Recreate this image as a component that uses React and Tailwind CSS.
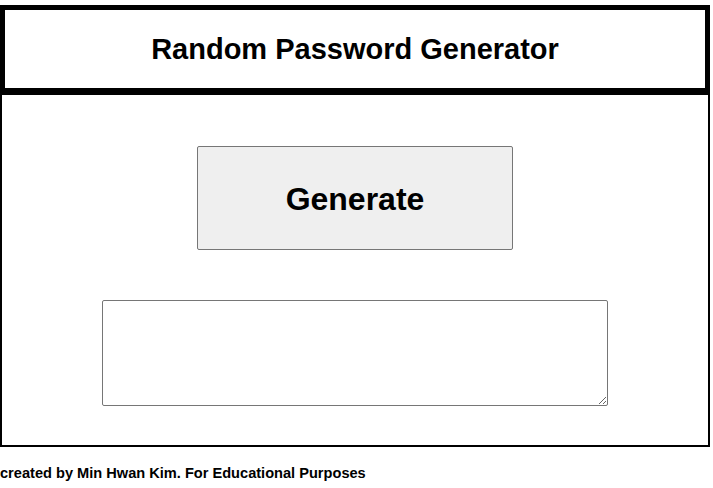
import React from "react";

const sans = { fontFamily: '"Liberation Sans", Arial, sans-serif' };

export default function App() {
  return (
    <div className="w-[713px] h-[488px] bg-white text-black" style={sans}>
      {/* Header */}
      <div className="mt-[5px] w-[710px] h-[88px] border-[5px] border-black flex items-center justify-center">
        <h1 className="text-[29px] font-bold pt-[2px]">Random Password Generator</h1>
      </div>

      {/* Main box */}
      <div className="w-[710px] h-[354px] border-2 border-black flex flex-col items-center">
        <button className="mt-[51px] w-[316px] h-[104px] bg-[#efefef] border border-[#767676] rounded-[2px] text-[32px] font-bold pt-[2px]">
          Generate
        </button>
        <textarea
          className="mt-[50px] w-[506px] h-[106px] border border-[#767676] rounded-[2px] bg-white ml-[-1px]"
          readOnly
        />
      </div>

      {/* Footer */}
      <p className="mt-[17px] text-[14.6px] font-bold leading-[18px]">
        created by Min Hwan Kim. For Educational Purposes
      </p>
    </div>
  );
}
